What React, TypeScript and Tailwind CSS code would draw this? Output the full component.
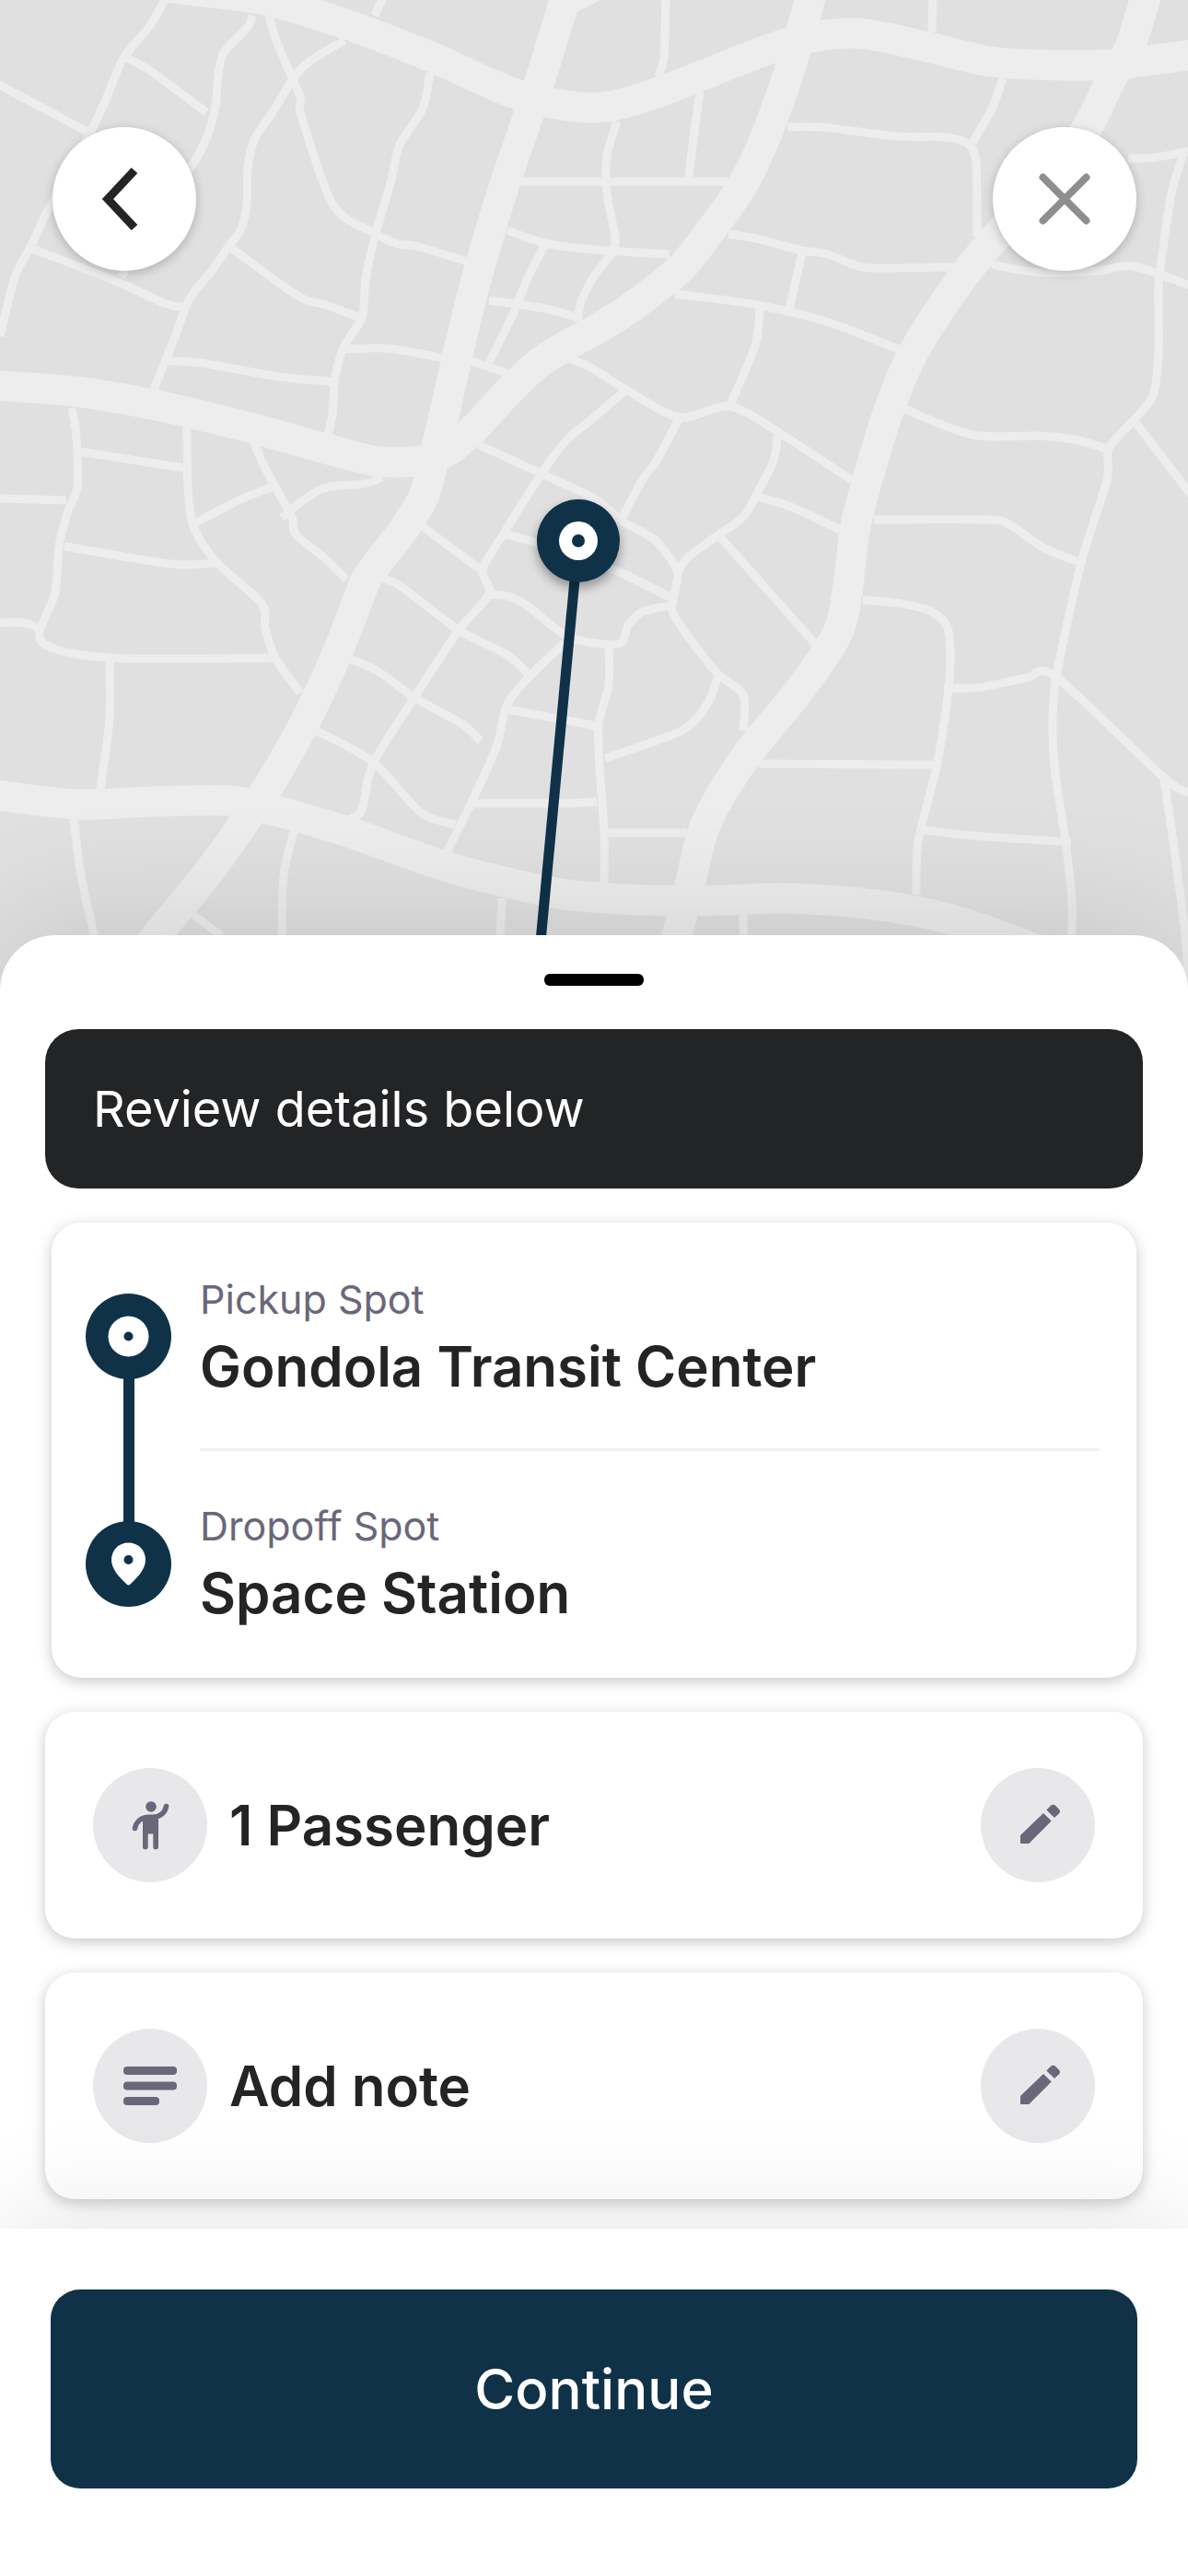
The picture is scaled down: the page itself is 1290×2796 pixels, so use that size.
import React from 'react';

type Point = [number, number];

const MAJOR_ROADS: Point[][] = [
  [[185, -13], [288, 0], [372, 25], [469, 62], [563, 103], [645, 117], [715, 100], [851, 48], [929, 36], [1007, 51], [1077, 67], [1155, 71], [1221, 69], [1310, 57]],
  [[617, -12], [582, 101], [547, 203], [517, 304], [496, 389], [477, 473], [461, 536], [438, 575], [400, 625], [385, 661], [364, 714], [330, 786], [289, 857], [227, 946], [171, 1014], [140, 1055]],
  [[-10, 418], [82, 425], [165, 439], [271, 464], [354, 487], [411, 501], [457, 500], [485, 490], [512, 468], [555, 422], [584, 395], [615, 375], [645, 359], [686, 333], [738, 292], [768, 255], [805, 203], [830, 152], [851, 95], [865, 51], [882, -10]],
  [[1246, -10], [1227, 51], [1208, 83], [1180, 139], [1130, 205], [1077, 262], [1040, 308], [992, 382], [966, 443], [945, 510], [929, 571], [920, 643], [909, 688], [869, 748], [810, 821], [767, 893], [749, 961], [733, 1025], [728, 1060]],
  [[-10, 862], [82, 873], [165, 870], [247, 869], [288, 877], [378, 903], [489, 942], [592, 967], [645, 974], [748, 978], [851, 975], [933, 980], [999, 990], [1056, 1005], [1150, 1040]],
];

const MINOR_ROADS: Point[][] = [
  [[183, -8], [162, 29], [134, 63], [115, 108], [99, 142], [76, 186], [51, 230], [35, 264], [16, 301], [0, 365]],
  [[-5, 90], [97, 144]],
  [[138, 63], [165, 78], [224, 122]],
  [[274, 17], [269, 29], [243, 57], [237, 81], [234, 115], [226, 145], [210, 177], [160, 245], [132, 301]],
  [[35, 270], [123, 304], [181, 330], [202, 333]],
  [[292, 17], [300, 44], [317, 84], [327, 108], [327, 125], [362, 223], [407, 253], [432, 265], [452, 267], [508, 284]],
  [[374, 44], [337, 66], [319, 84], [296, 122], [276, 152], [269, 183], [268, 223], [261, 250], [247, 269], [230, 294], [206, 324], [189, 368], [167, 423]],
  [[467, 79], [459, 118], [434, 157], [424, 199], [407, 257], [397, 304], [393, 345], [374, 375], [364, 409], [361, 450], [356, 472]],
  [[251, 269], [323, 321], [354, 331], [391, 345]],
  [[183, 392], [218, 394], [304, 409], [360, 414]],
  [[376, 379], [420, 378], [479, 388]],
  [[512, 392], [551, 405]],
  [[531, 326], [592, 335], [632, 346]],
  [[592, 265], [572, 304], [557, 341], [531, 394]],
  [[551, 250], [592, 264], [645, 271], [727, 276]],
  [[666, 273], [645, 300], [632, 325], [628, 340]],
  [[565, 197], [791, 197]],
  [[418, -8], [407, 17]],
  [[78, 443], [83, 475], [84, 529], [74, 554], [64, 593], [60, 643], [45, 696], [119, 714], [296, 714]],
  [[86, 490], [200, 508]],
  [[203, 463], [204, 529], [210, 571], [234, 609], [284, 655], [288, 682], [300, 716], [326, 752]],
  [[276, 480], [284, 500], [298, 527], [317, 561], [321, 580], [354, 607], [376, 629]],
  [[306, 562], [329, 543], [354, 529], [395, 525], [415, 518]],
  [[212, 568], [255, 545], [294, 529]],
  [[0, 541], [72, 543]],
  [[70, 593], [185, 612], [239, 611]],
  [[0, 676], [27, 676], [45, 684]],
  [[119, 716], [119, 779], [109, 857]],
  [[80, 889], [88, 950], [102, 1014], [110, 1045]],
  [[319, 902], [308, 950], [306, 1014], [306, 1045]],
  [[210, 993], [241, 1016]],
  [[545, 975], [542, 1040]],
  [[520, 483], [588, 514], [645, 541], [676, 566], [711, 586], [735, 620], [731, 650], [733, 670], [777, 729], [807, 754], [807, 793]],
  [[680, 423], [645, 453], [615, 478], [588, 514], [547, 579], [524, 618], [531, 645], [498, 684], [450, 757], [405, 829], [393, 879], [380, 889]],
  [[619, 389], [645, 401], [680, 423], [738, 453], [793, 441], [851, 473], [925, 521]],
  [[738, 453], [713, 500], [698, 520], [676, 561]],
  [[844, 473], [840, 500], [822, 536], [807, 561], [781, 580], [748, 604], [735, 622]],
  [[822, 539], [859, 550], [912, 575]],
  [[783, 584], [888, 702]],
  [[549, 580], [582, 589], [670, 620], [729, 649]],
  [[729, 657], [698, 664], [682, 679], [674, 698], [645, 698], [613, 689], [572, 657], [551, 647], [531, 645]],
  [[613, 698], [580, 729], [551, 764], [539, 811], [510, 875], [485, 925]],
  [[413, 627], [436, 637], [498, 684], [551, 711], [578, 736]],
  [[378, 714], [411, 729], [450, 757], [502, 786], [522, 804]],
  [[343, 793], [405, 827], [457, 882], [494, 895]],
  [[457, 570], [524, 620]],
  [[551, 770], [649, 788]],
  [[512, 872], [609, 872], [648, 870]],
  [[661, 700], [661, 743], [650, 786], [651, 832], [656, 904], [656, 961]],
  [[779, 736], [768, 764], [740, 793], [657, 823]],
  [[657, 904], [746, 904]],
  [[824, 829], [1015, 830]],
  [[937, 651], [970, 654], [1007, 662], [1028, 679], [1032, 714], [1028, 764], [1017, 832], [997, 914], [995, 971]],
  [[1025, 747], [1065, 746], [1114, 736], [1147, 735], [1266, 846], [1295, 860]],
  [[1285, 166], [1272, 210], [1262, 277], [1258, 311], [1258, 382], [1252, 429], [1231, 456], [1204, 487], [1202, 521], [1174, 611], [1147, 734], [1143, 786], [1145, 832], [1157, 914], [1164, 979], [1163, 1045]],
  [[1225, 172], [1254, 171], [1295, 163]],
  [[1077, 287], [1130, 296], [1192, 294], [1231, 289], [1295, 311]],
  [[1231, 456], [1295, 539]],
  [[982, 444], [1056, 472], [1130, 473], [1171, 478], [1204, 488]],
  [[949, 564], [1073, 564], [1097, 570], [1134, 595], [1174, 611]],
  [[997, 900], [1056, 907], [1163, 914]],
  [[1264, 846], [1274, 914], [1287, 1014], [1290, 1070]],
  [[723, -8], [721, 61], [715, 83]],
  [[760, 100], [754, 142], [748, 193]],
  [[670, 132], [659, 169], [659, 210], [668, 257], [666, 275]],
  [[1013, -8], [1012, 35]],
  [[855, 138], [892, 138], [974, 148], [1028, 149], [1052, 157], [1060, 179], [1061, 257]],
  [[1089, 85], [1077, 118], [1056, 155]],
  [[791, 254], [826, 260], [871, 272], [896, 275], [929, 288], [949, 291], [1036, 290]],
  [[871, 274], [857, 336]],
  [[733, 319], [822, 331], [900, 350], [978, 380]],
  [[825, 335], [820, 375], [793, 439]],
  [[807, 985], [808, 1045]],
  [[652, -5], [622, 10]],
];

// Smooth curve through every point
function toPath(points: Point[]) {
  let d = `M${points[0][0]} ${points[0][1]}`;
  for (let i = 0; i < points.length - 1; i++) {
    const p0 = points[i - 1] ?? points[i];
    const p1 = points[i];
    const p2 = points[i + 1];
    const p3 = points[i + 2] ?? p2;
    d += `C${p1[0] + (p2[0] - p0[0]) / 7} ${p1[1] + (p2[1] - p0[1]) / 7} ${p2[0] - (p3[0] - p1[0]) / 7} ${p2[1] - (p3[1] - p1[1]) / 7} ${p2[0]} ${p2[1]}`;
  }
  return d;
}

function RouteMap() {
  return (
    <svg
      viewBox="0 0 1290 1075"
      preserveAspectRatio="xMidYMin slice"
      className="absolute inset-0 h-full w-full"
      aria-hidden="true"
    >
      <g fill="none" stroke="#ededed" strokeLinejoin="round">
        {MINOR_ROADS.map((road, i) => (
          <path key={i} d={toPath(road)} strokeWidth="9" />
        ))}
        {MAJOR_ROADS.map((road, i) => (
          <path key={i} d={toPath(road)} strokeWidth="33" />
        ))}
      </g>
      <path d="M628 587L582 1075" stroke="#0f3248" strokeWidth="11" />
      <g className="drop-shadow-[0_6px_6px_rgba(0,0,0,0.35)]">
        <circle cx="628" cy="587" r="45" fill="#0f3248" />
      </g>
      <circle cx="628" cy="587" r="21" fill="#fff" />
      <circle cx="628" cy="587" r="7" fill="#0f3248" />
    </svg>
  );
}

function RoundButton({ label, children }: { label: string; children: React.ReactNode }) {
  return (
    <button
      type="button"
      aria-label={label}
      className="size-[156px] rounded-full bg-white shadow-[0_3px_12px_rgba(0,0,0,0.22)]"
    >
      <svg viewBox="0 0 156 156" fill="none" className="size-full">
        {children}
      </svg>
    </button>
  );
}

function Timeline() {
  return (
    <div className="flex flex-col items-center">
      <svg viewBox="0 0 93 93" className="size-[93px]">
        <circle cx="46.5" cy="46.5" r="46.5" fill="#0f3248" />
        <circle cx="46.5" cy="46.5" r="22" fill="#fff" />
        <circle cx="46.5" cy="46.5" r="5" fill="#0f3248" />
      </svg>
      <div className="-my-px h-[156px] w-3 bg-[#0f3248]" />
      <svg viewBox="0 0 93 93" className="size-[93px]">
        <circle cx="46.5" cy="46.5" r="46.5" fill="#0f3248" />
        <path
          d="M46.5 23.5C36 23.5 28 31.5 28 42C28 51.5 35.5 60 44.5 68.5Q46.5 70.3 48.5 68.5C57.5 60 65 51.5 65 42C65 31.5 57 23.5 46.5 23.5Z"
          fill="#fff"
        />
        <circle cx="46.5" cy="42" r="5" fill="#0f3248" />
      </svg>
    </div>
  );
}

function Stop({ label, name }: { label: string; name: string }) {
  return (
    <div>
      <p className="text-[43px] leading-[60px] text-[#6a677a]">{label}</p>
      <p className="text-[60px] leading-[86px] font-semibold text-[#232426]">{name}</p>
    </div>
  );
}

function PassengerIcon() {
  return (
    <svg viewBox="0 0 124 124" className="size-full">
      <circle cx="63" cy="42" r="5.8" fill="#6a677a" />
      <path
        d="M45.5 65.5C47 57.5 53 53.2 61 53.2H65C73 53.2 78.5 48 79.5 41.5"
        fill="none"
        stroke="#6a677a"
        strokeWidth="5.6"
        strokeLinecap="round"
      />
      <path
        d="M54 52H71V85.5A2.8 2.8 0 0 1 65.3 85.5V71.5H59.7V85.5A2.8 2.8 0 0 1 54 85.5Z"
        fill="#6a677a"
      />
    </svg>
  );
}

function NoteIcon() {
  return (
    <svg viewBox="0 0 124 124" fill="#6a677a" className="size-full">
      <rect x="33" y="41" width="58" height="9" rx="4" />
      <rect x="33" y="57.5" width="58" height="9" rx="4" />
      <rect x="33" y="74" width="39" height="9" rx="4" />
    </svg>
  );
}

function DetailRow({ icon, text, action }: { icon: React.ReactNode; text: string; action: string }) {
  return (
    <div className="flex h-[246px] items-center gap-6 rounded-[32px] bg-white px-[52px] shadow-[0_4px_16px_rgba(0,0,0,0.22)]">
      <div className="size-[124px] rounded-full bg-[#e8e8ea]">{icon}</div>
      <p className="flex-1 text-[60px] leading-[86px] font-semibold text-[#232426]">{text}</p>
      <button type="button" aria-label={action} className="size-[124px] rounded-full bg-[#e8e8ea]">
        <svg viewBox="0 0 124 124" fill="#6a677a" className="size-full">
          <path d="M43 82V73L68 49L76.7 57.6L52.3 82Z" />
          <path d="M71.3 45.5L76 40.8Q78.5 38.5 81 40.8L85 44.7Q87 47 85 49.2L80 54Z" />
        </svg>
      </button>
    </div>
  );
}

export default function App() {
  return (
    <div className="flex min-h-screen flex-col bg-white font-['Inter',sans-serif]">
      <header className="relative h-[1075px] bg-[#e0e0e0]">
        <RouteMap />
        <div className="relative flex justify-between pt-[138px] pr-14 pl-[57px]">
          <RoundButton label="Back">
            <path d="M89 47L60 78L89 109" stroke="#232426" strokeWidth="9" />
          </RoundButton>
          <RoundButton label="Close">
            <path d="M54.5 54.5L101.5 101.5M101.5 54.5L54.5 101.5" stroke="#8e8e8e" strokeWidth="8" strokeLinecap="round" />
          </RoundButton>
        </div>
      </header>

      <main className="relative -mt-[60px] flex flex-1 flex-col rounded-t-[60px] bg-white px-[49px] pt-[42px] pb-8 shadow-[0_0_150px_rgba(0,0,0,0.14)]">
        <div className="mx-auto h-[13px] w-[108px] rounded-md bg-black" />

        <div className="mt-[47px] flex h-[173px] items-center rounded-[36px] bg-[#232426] px-[52px]">
          <h1 className="text-[54px] leading-[72px] text-white">Review details below</h1>
        </div>

        <section className="mx-[7px] mt-[37px] flex items-center gap-[31px] rounded-[32px] bg-white pr-10 pl-[37px] shadow-[0_4px_16px_rgba(0,0,0,0.22)]">
          <Timeline />
          <div className="flex-1 pt-[53px] pb-[49px]">
            <Stop label="Pickup Spot" name="Gondola Transit Center" />
            <hr className="mt-[46px] mb-[51px] border-t-3 border-[#f0f0f2]" />
            <Stop label="Dropoff Spot" name="Space Station" />
          </div>
        </section>

        <div className="mt-[37px] flex flex-col gap-[37px]">
          <DetailRow icon={<PassengerIcon />} text="1 Passenger" action="Edit passengers" />
          <DetailRow icon={<NoteIcon />} text="Add note" action="Edit note" />
        </div>
      </main>

      <footer className="relative bg-white px-[55px] pt-[66px] pb-[95px] shadow-[0_0_120px_rgba(0,0,0,0.12)]">
        <button
          type="button"
          className="h-[216px] w-full rounded-[32px] bg-[#0f3248] text-[60px] font-medium text-white"
        >
          Continue
        </button>
      </footer>
    </div>
  );
}
